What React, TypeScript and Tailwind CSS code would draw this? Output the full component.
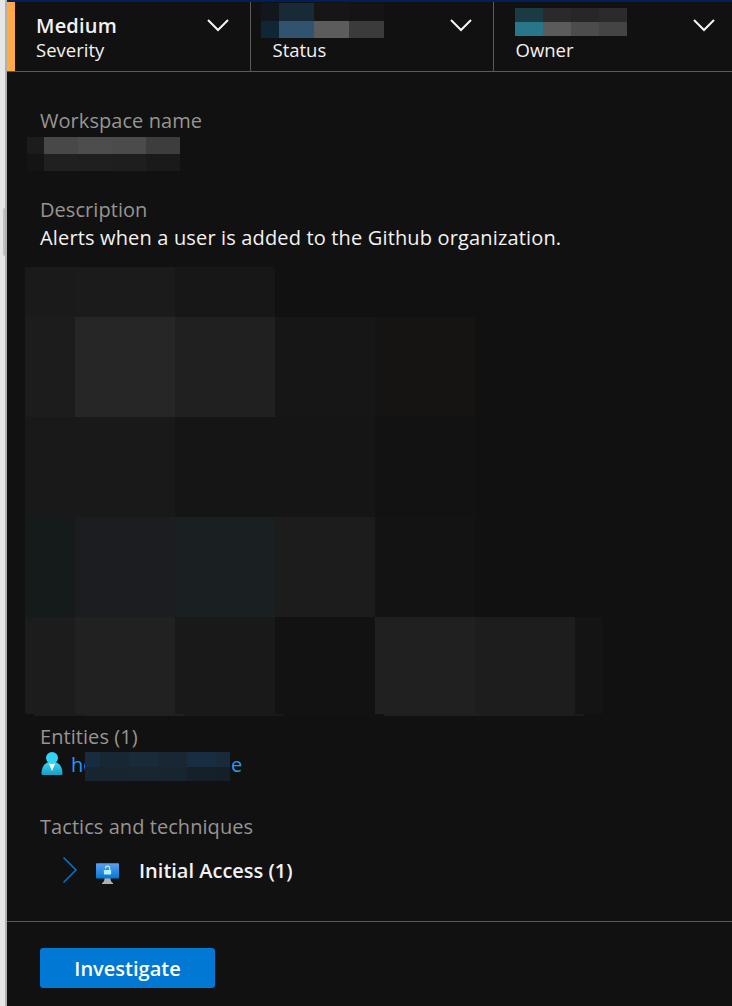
import type { ReactNode } from "react";

function Mosaic({ cols, rows, colors, className = "" }: { cols: number[]; rows: number[]; colors: string[][]; className?: string }) {
  return (
    <div
      className={`grid shrink-0 ${className}`}
      aria-hidden="true"
      style={{
        gridTemplateColumns: cols.map((c) => `${c}px`).join(" "),
        gridTemplateRows: rows.map((r) => `${r}px`).join(" "),
      }}
    >
      {colors.flatMap((row, y) => row.map((c, x) => <span key={`${y}-${x}`} style={{ backgroundColor: c }} />))}
    </div>
  );
}

function ChevronDown() {
  return (
    <svg className="mt-[16px] h-[14px] w-[22px] shrink-0" viewBox="0 0 22 14" fill="none">
      <path d="M1 2 11 12 21 2" stroke="#f5f5f5" strokeWidth="2" />
    </svg>
  );
}

function UserIcon() {
  return (
    <svg className="h-[24px] w-[22px] shrink-0" viewBox="0 0 22 24">
      <defs>
        <linearGradient id="body" x1="0" y1="0" x2="0" y2="1">
          <stop offset="0" stopColor="#32d4f5" />
          <stop offset="1" stopColor="#1c9cc0" />
        </linearGradient>
      </defs>
      <path d="M0.5 21.5C.5 15.5 3.5 10.500 7.500 10.500h7c4 0 7 5 7 11 0 .9-.6 1.500-1.500 1.500H2C1.100 23 .5 22.400.5 21.500Z" fill="url(#body)" />
      <path d="M7.800 11.500h6.400L11 19Z" fill="#f2fcff" />
      <circle cx="11" cy="6" r="6" fill="#32d4f5" />
    </svg>
  );
}

function MonitorIcon() {
  return (
    <svg className="h-[22px] w-[23px] shrink-0" viewBox="0 0 23 22">
      <defs>
        <linearGradient id="screen" x1="0" y1="0" x2="0" y2="1">
          <stop offset="0" stopColor="#5ea0ef" />
          <stop offset="1" stopColor="#0078d4" />
        </linearGradient>
      </defs>
      <path d="M8.500 15h6c0 2.500.5 4 2.500 5v1H6v-1C8 19 8.500 17.500 8.500 15Z" fill="#b0b0b0" />
      <rect x="0" y="0.300" width="23" height="15.200" rx="0.800" fill="url(#screen)" />
      <rect x="7.900" y="7" width="7.200" height="4.500" rx=".4" fill="#b6f1ff" />
      <path d="M9.500 5.500V5.200a2.100 2.100 0 0 1 4.200 0v2" fill="none" stroke="#b6f1ff" strokeWidth="1.100" />
    </svg>
  );
}

function Label({ children, className = "" }: { children: ReactNode; className?: string }) {
  return <div className={`h-[28px] whitespace-nowrap text-[20px] leading-[28px] tracking-[0.06px] text-[#979593] ${className}`}>{children}</div>;
}

export default function App() {
  return (
    <div className="flex h-[1006px] w-[732px] overflow-hidden bg-[#111111] font-['Open_Sans','Noto_Sans',sans-serif] text-[#f3f2f1]">
      <div className="flex w-[7px] shrink-0 flex-col items-end border-r-2 border-[#b0b0b0] bg-[#e6e6e6] pt-[208px]">
        <div className="h-[48px] w-[2px] rounded-l bg-[#c2c2c2]" />
      </div>
      <main className="flex min-w-0 flex-1 flex-col">
        <header className="flex h-[72px] shrink-0 border-t-2 border-b border-t-[#00205b] border-b-[#5a5a5a]">
          <div className="flex w-[244px] shrink-0 justify-between border-r border-l-8 border-r-[#5a5a5a] border-l-[#ffaa44] pr-[21px] pl-[21px]">
            <div>
              <div className="h-[24px] pt-[10px] text-[20px] leading-[28px] font-semibold tracking-[0.2px]">Medium</div>
              <div className="pt-[12px] text-[18.500px] leading-[24px]">Severity</div>
            </div>
            <ChevronDown />
          </div>
          <div className="flex w-[243px] shrink-0 justify-between border-r border-[#5a5a5a] pr-[21px] pl-[10px]">
            <div>
              <Mosaic className="mt-[1px]" cols={[18, 35, 35, 35]} rows={[18, 17]} colors={[["#11171d", "#182a36", "#161616", "#141414"], ["#112635", "#30536f", "#5d5c5d", "#3b3b3b"]]} />
              <div className="pl-[11.500px] text-[18.500px] leading-[24px]">Status</div>
            </div>
            <ChevronDown />
          </div>
          <div className="flex flex-1 justify-between pr-[17px] pl-[21px]">
            <div>
              <Mosaic className="mt-[6px]" cols={[28, 28, 28, 28]} rows={[14, 14]} colors={[["#1a3b43", "#2a2a2a", "#272727", "#2b2b2b"], ["#28768a", "#5b5b5b", "#4c4c4c", "#444444"]]} />
              <div className="pt-[2px] pl-[0.500px] text-[18.500px] leading-[24px]">Owner</div>
            </div>
            <ChevronDown />
          </div>
        </header>
        <section className="flex h-[849px] shrink-0 flex-col pt-[35px] pl-[33px]">
          <Label>Workspace name</Label>
          <Mosaic className="mt-[2px] -ml-[13px]" cols={[17, 34, 34, 34, 34]} rows={[17, 17]} colors={[["#1c1c1c", "#484848", "#4d4d4d", "#4b4b4b", "#3d3d3d"], ["#141414", "#202020", "#1f1f1f", "#1e1e1e", "#1a1a1a"]]} />
          <Label className="mt-[25px]">Description</Label>
          <p className="h-[28px] text-[20px] leading-[28px] font-medium tracking-[0.155px] whitespace-nowrap">Alerts when a user is added to the Github organization.</p>
          <Mosaic
            className="mt-[15px] -ml-[15px]"
            cols={[50, 100, 100, 100, 100, 100, 28]}
            rows={[50, 100, 100, 100, 97]}
            colors={[
              ["#1a1a1a", "#1b1b1b", "#171717", "#111111", "#111111", "#111111", "#111111"],
              ["#1c1c1c", "#262626", "#202020", "#161616", "#151412", "#111111", "#111111"],
              ["#191919", "#191919", "#151515", "#151515", "#121212", "#111111", "#111111"],
              ["#151a1b", "#1b1d21", "#1a1f22", "#1c1c1c", "#131313", "#111111", "#111111"],
              ["#1c1c1c", "#212121", "#191919", "#121212", "#202020", "#1d1d1d", "#141414"],
            ]}
          />
          <Mosaic className="-ml-[6px]" cols={[50, 100, 100, 100, 100, 100]} rows={[2]} colors={[["#1c1c1c", "#202020", "#191919", "#121212", "#1f1f1f", "#1c1c1c"]]} />
          <Label className="mt-[7px]">Entities (1)</Label>
          <div className="flex h-[30px] items-start text-[20px] leading-[28px] text-[#2899f5]">
            <div className="pt-px pl-[0.500px]"><UserIcon /></div>
            <span className="ml-[8.500px] w-[14px] whitespace-nowrap">he</span>
            <Mosaic className="mt-[1px]" cols={[15, 29, 29, 29, 29, 14]} rows={[15, 14]} colors={[["#172c40", "#182734", "#192a39", "#182733", "#182d42", "#192a3b"], ["#172530", "#172530", "#182632", "#172531", "#15202a", "#141f29"]]} />
            <span className="ml-[1px]">e</span>
          </div>
          <Label className="mt-[32px]">Tactics and techniques</Label>
          <div className="mt-[14px] flex h-[32px] items-center">
            <svg className="-mt-[2px] ml-[22px] h-[28px] w-[16px] shrink-0" viewBox="0 0 16 28" fill="none"><path d="M1.500 1.500 14 14 1.500 26.500" stroke="#0078d4" strokeWidth="1.500" /></svg>
            <div className="ml-[18px] pt-[5px]"><MonitorIcon /></div>
            <span className="ml-[20px] text-[20px] leading-[28px] font-semibold whitespace-nowrap">Initial Access (1)</span>
          </div>
        </section>
        <footer className="flex-1 border-t border-[#5a5a5a] pt-[26px] pl-[33px]">
          <button className="h-[40px] w-[175px] rounded-[3px] bg-[#0078d4] pt-px text-[20px] leading-[39px] font-semibold text-white">Investigate</button>
        </footer>
      </main>
    </div>
  );
}
